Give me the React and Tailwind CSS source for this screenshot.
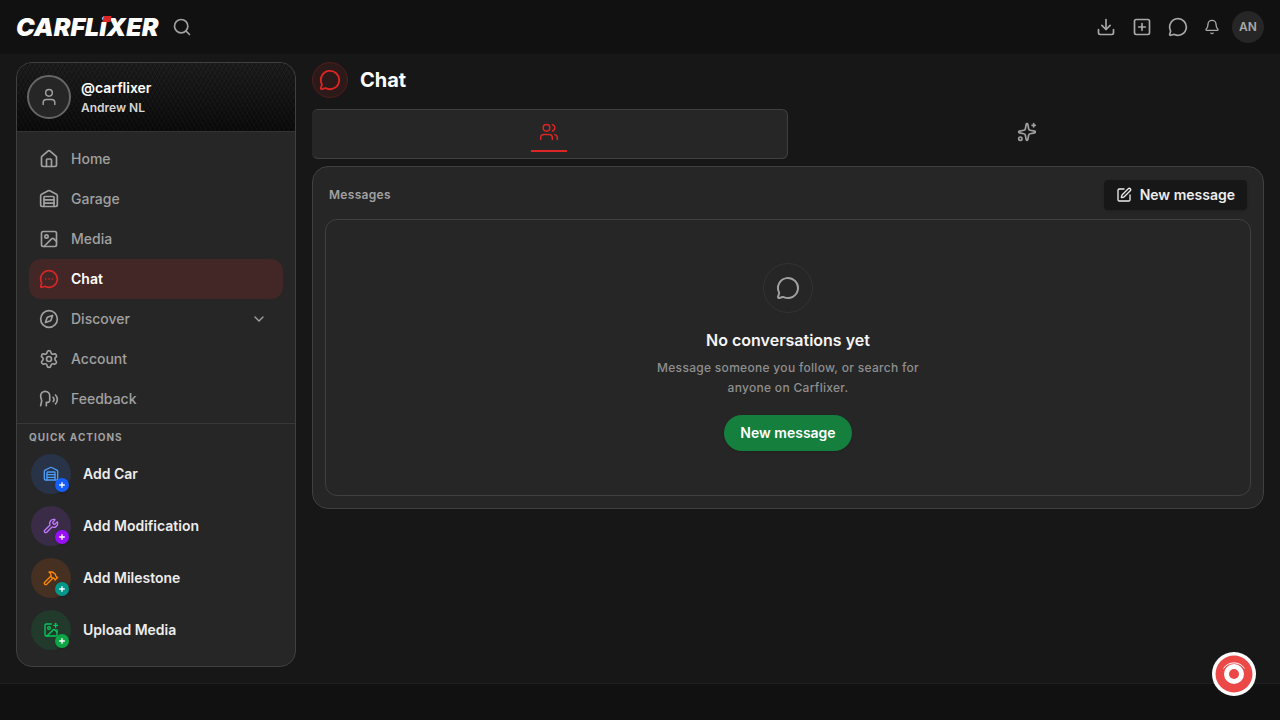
import React from "react";
import {
  Bell,
  ChevronDown,
  Compass,
  Download,
  Hammer,
  House,
  Image,
  ImagePlus,
  MessageCircle,
  MessageCircleMore,
  Plus,
  Search,
  Settings,
  Sparkles,
  Speech,
  SquarePen,
  SquarePlus,
  User,
  Users,
  Warehouse,
  Wrench,
} from "lucide-react";

const navItems = [
  { label: "Home", icon: House },
  { label: "Garage", icon: Warehouse },
  { label: "Media", icon: Image },
  { label: "Chat", icon: MessageCircleMore, active: true },
  { label: "Discover", icon: Compass, expandable: true },
  { label: "Account", icon: Settings },
  { label: "Feedback", icon: Speech },
];

const quickActions = [
  { label: "Add Car", icon: Warehouse, circle: "bg-[#283347] text-[#4a9df8]", badge: "bg-[#155dfc]" },
  { label: "Add Modification", icon: Wrench, circle: "bg-[#3a2b47] text-[#c27aff]", badge: "bg-[#9810fa]" },
  { label: "Add Milestone", icon: Hammer, circle: "bg-[#463022] text-[#ff8904]", badge: "bg-[#009689]" },
  { label: "Upload Media", icon: ImagePlus, circle: "bg-[#213a2b] text-[#05c95a]", badge: "bg-[#0ea547]" },
];

const headerActions = [
  { label: "Install", icon: Download },
  { label: "Create", icon: SquarePlus },
  { label: "Messages", icon: MessageCircle },
];

function Logo() {
  return (
    <a href="#" className="flex items-center text-[25px] leading-6 font-black text-white italic">
      <span>CARFL</span>
      <span className="relative">
        i
        <span className="absolute top-px -right-1 h-1.5 w-2 -skew-x-12 bg-[#dc2626]" />
      </span>
      <span>XER</span>
    </a>
  );
}

function Header() {
  return (
    <header className="flex h-[54px] items-center justify-between bg-[#111111] px-4">
      <div className="flex items-center gap-3.5">
        <Logo />
        <button aria-label="Search" className="text-neutral-400">
          <Search size={20} />
        </button>
      </div>
      <div className="flex items-center gap-4 text-[#a9a9a9]">
        {headerActions.map(({ label, icon: Icon }) => (
          <button key={label} aria-label={label}>
            <Icon size={20} />
          </button>
        ))}
        <div className="flex items-center gap-3">
          <button aria-label="Notifications">
            <Bell size={16} />
          </button>
          <button className="size-8 rounded-full bg-[#262626] text-xs font-semibold">AN</button>
        </div>
      </div>
    </header>
  );
}

function Sidebar() {
  return (
    <aside className="w-[280px] shrink-0 overflow-hidden rounded-2xl border border-[#404040] bg-[#262626]">
      <div className="flex h-[69px] items-center gap-2.5 border-b border-[#333333] bg-[repeating-linear-gradient(60deg,rgba(255,255,255,0.025)_0px,rgba(255,255,255,0.025)_1px,transparent_1px,transparent_4px),repeating-linear-gradient(-60deg,rgba(0,0,0,0.25)_0px,rgba(0,0,0,0.25)_1px,transparent_1px,transparent_4px),linear-gradient(180deg,#1c1c1c,#0a0a0a)] px-2.5">
        <span className="flex size-11 items-center justify-center rounded-full border-2 border-[#666666] bg-[#262626] text-neutral-400">
          <User size={20} strokeWidth={1.75} />
        </span>
        <div className="pt-0.5">
          <p className="text-sm leading-5 font-semibold text-white">@carflixer</p>
          <p className="text-xs leading-5 font-semibold text-[#d6d6d6]">Andrew NL</p>
        </div>
      </div>

      <nav className="px-3 pt-[7px] pb-1">
        {navItems.map(({ label, icon: Icon, active, expandable }) => (
          <a
            key={label}
            href="#"
            className={`flex h-10 items-center gap-3 rounded-xl px-2.5 text-sm ${
              active ? "bg-[#432626] font-semibold text-white" : "font-medium text-[#a1a1a1]"
            }`}
          >
            <Icon size={20} className={active ? "text-[#dc2626]" : ""} />
            <span className="flex-1">{label}</span>
            {expandable && <ChevronDown size={16} className="mr-1.5" />}
          </a>
        ))}
      </nav>

      <section className="border-t border-[#383838] px-3 pt-[5px] pb-2.5">
        <h2 className="text-[10px] leading-4 font-bold tracking-widest text-[#a1a1a1]">QUICK ACTIONS</h2>
        <div className="mt-[3px]">
          {quickActions.map(({ label, icon: Icon, circle, badge }) => (
            <button key={label} className="flex h-[52px] w-full items-center gap-3 px-0.5 text-left">
              <span className={`relative flex size-10 items-center justify-center rounded-full ${circle}`}>
                <Icon size={16} />
                <span
                  className={`absolute right-0.5 bottom-0.5 flex size-3.5 items-center justify-center rounded-full text-white shadow-sm ${badge}`}
                >
                  <Plus size={8} strokeWidth={4} />
                </span>
              </span>
              <span className="text-sm font-semibold text-[#ededed]">{label}</span>
            </button>
          ))}
        </div>
      </section>
    </aside>
  );
}

function EmptyState() {
  return (
    <div className="flex flex-col items-center rounded-xl border border-[#404040] px-4 pt-[43px] pb-11 text-center">
      <span className="flex size-[50px] items-center justify-center rounded-full border border-[#333333] text-[#a1a1a1]">
        <MessageCircle size={24} />
      </span>
      <h2 className="mt-[15px] text-base leading-6 font-semibold text-[#f5f5f5]">No conversations yet</h2>
      <p className="mt-1.5 max-w-[280px] text-xs leading-5 font-medium tracking-wide text-[#8f8f8f]">
        Message someone you follow, or search for anyone on Carflixer.
      </p>
      <button className="mt-[17px] h-9 rounded-full bg-[#15803d] px-4 text-sm font-semibold text-white shadow-sm">
        New message
      </button>
    </div>
  );
}

function ChatPage() {
  return (
    <main className="min-w-0 flex-1">
      <div className="flex items-center gap-3">
        <span className="flex size-9 items-center justify-center rounded-full border border-[#541c1c] bg-[#2c1a1a] text-[#dc2626]">
          <MessageCircle size={22} />
        </span>
        <h1 className="text-xl leading-7 font-bold text-white">Chat</h1>
      </div>

      <div role="tablist" className="mt-[11px] flex gap-0.5">
        <button
          role="tab"
          aria-selected="true"
          aria-label="People"
          className="flex h-[50px] flex-1 flex-col items-center justify-center rounded-md border border-l-0 border-[#404040] bg-[#262626] text-[#dc2626]"
        >
          <span className="flex size-9 items-center justify-center border-b-2 border-[#dc2626] pb-0.5">
            <Users size={20} strokeWidth={1.75} />
          </span>
        </button>
        <button
          role="tab"
          aria-selected="false"
          aria-label="Assistant"
          className="flex h-[50px] flex-1 items-center justify-center pb-1 text-[#a1a1a1]"
        >
          <Sparkles size={20} />
        </button>
      </div>

      <section className="mt-[7px] rounded-2xl border border-[#404040] bg-[#262626] p-3">
        <div className="mb-2 flex h-8 items-center justify-between px-1">
          <h2 className="text-xs font-semibold tracking-wide text-[#a1a1a1]">Messages</h2>
          <button className="flex h-[30px] items-center gap-2 rounded-sm bg-[#171717] px-3 text-sm font-semibold text-[#ededed] shadow-sm">
            <SquarePen size={16} />
            New message
          </button>
        </div>
        <EmptyState />
      </section>
    </main>
  );
}

export default function App() {
  return (
    <div className="flex min-h-screen flex-col bg-[#171717] font-['Inter',sans-serif]">
      <Header />
      <div className="flex items-start gap-4 px-4 pt-2 pb-4">
        <Sidebar />
        <ChatPage />
      </div>
      <footer className="flex-1 border-t border-[#1f1f1f] bg-[#111111]" />

      <button aria-label="Help" className="fixed right-6 bottom-6 size-11 rounded-full">
        <svg viewBox="0 0 44 44" className="size-11">
          <circle cx="22" cy="22" r="22" fill="#fff" />
          <circle cx="22" cy="22" r="18.5" fill="#ed4848" />
          <circle cx="22" cy="22" r="7.5" fill="none" stroke="#fff" strokeWidth="5" />
          <path d="M11.5 16.5C16 9 28 9 32.5 16.5" fill="none" stroke="#fff" strokeWidth="1" />
        </svg>
      </button>
    </div>
  );
}
